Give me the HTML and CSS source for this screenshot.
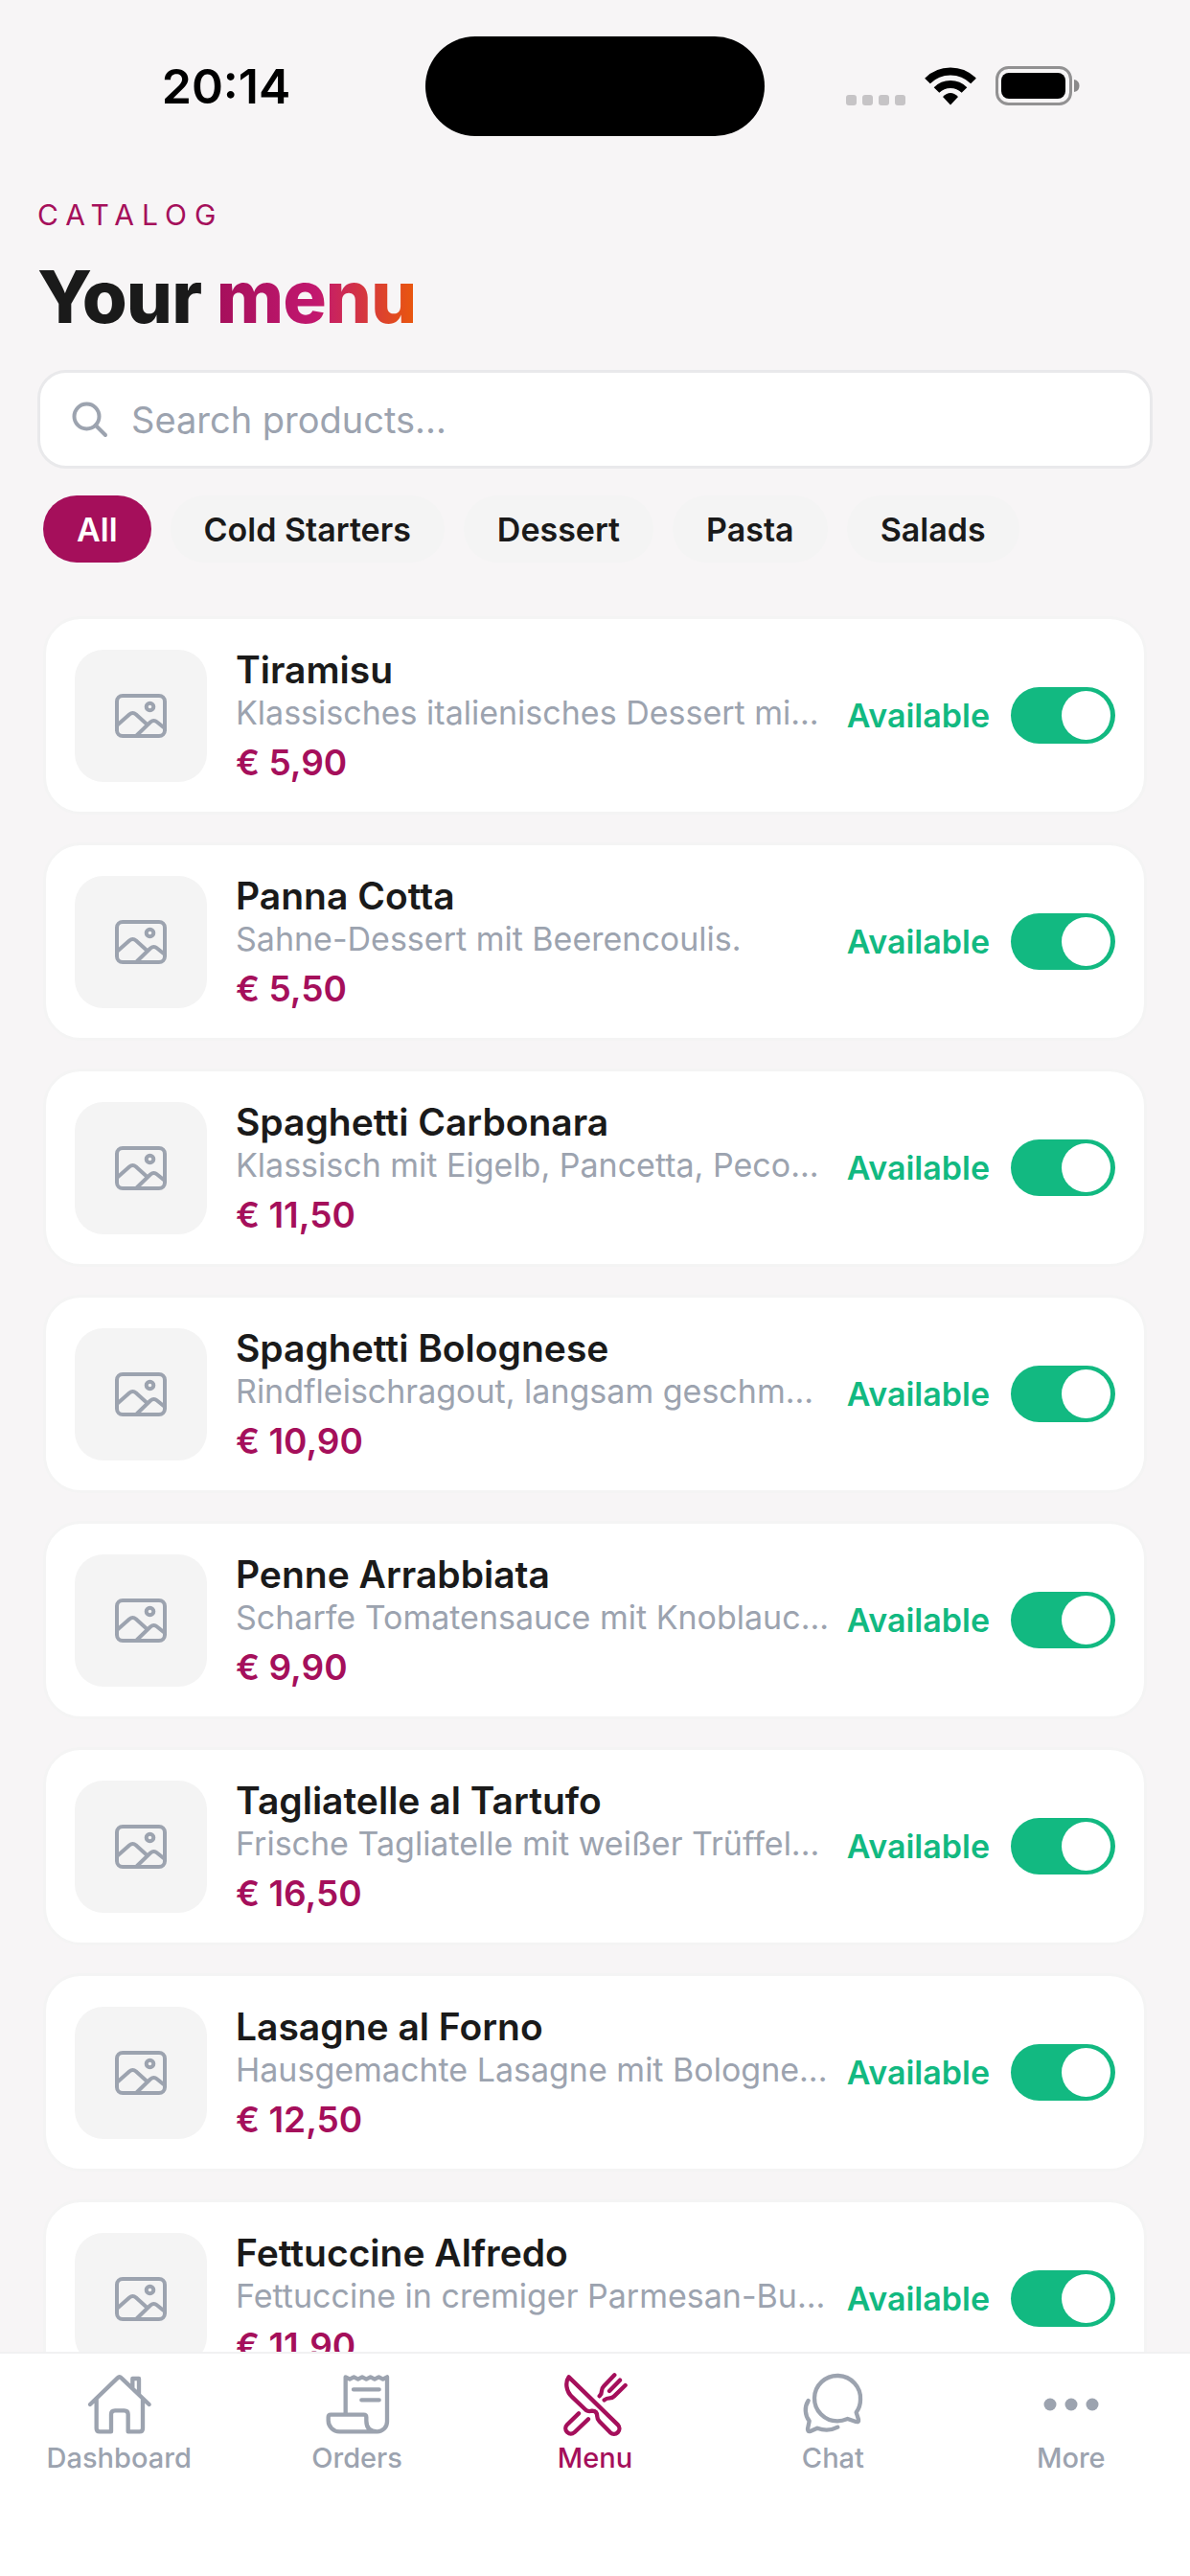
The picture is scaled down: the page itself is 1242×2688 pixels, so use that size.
FILE: index.html
```html
<!DOCTYPE html>
<html lang="en">
<head>
    <meta charset="UTF-8">
    <meta name="viewport" content="width=device-width, initial-scale=1.0">
    <title>Your menu</title>
    <link rel="stylesheet" href="styles.css">
</head>
<body>
    <!-- shared icons -->
    <svg class="sprite" aria-hidden="true">
        <symbol id="icon-image" viewBox="0 0 56 48">
            <rect x="3" y="3" width="50" height="42" rx="6"/>
            <circle cx="37.5" cy="14.5" r="3.8"/>
            <path d="M3 34 L16 22.500 q3.500 -3 7 0 L34 32.500 M24 44 L38 30.500 q3.500 -3 7 0 L53 37"/>
        </symbol>
    </svg>

    <div class="status-bar">
        <div class="time">20:14</div>
        <div class="island"></div>
        <div class="status-icons">
            <svg class="signal" viewBox="0 0 62 42" aria-hidden="true">
                <rect x="0" y="30" width="11" height="11" rx="3"/>
                <rect x="17" y="30" width="11" height="11" rx="3"/>
                <rect x="34" y="30" width="11" height="11" rx="3"/>
                <rect x="51" y="30" width="11" height="11" rx="3"/>
            </svg>
            <svg class="wifi" viewBox="0 0 54 42" aria-hidden="true">
                <path d="M3 15.500 A34 34 0 0 1 51 15.500" fill="none" stroke="#000" stroke-width="8"/>
                <path d="M12.500 25 A20.500 20.500 0 0 1 41.500 25" fill="none" stroke="#000" stroke-width="8"/>
                <path d="M19 32 Q27 24 35 32 L27 40.500 Z"/>
            </svg>
            <svg class="battery" viewBox="0 0 88 42" aria-hidden="true">
                <rect x="1.500" y="1.500" width="77" height="38" rx="12" fill="none" stroke="#929192" stroke-width="3"/>
                <rect x="6" y="7" width="67" height="27" rx="8"/>
                <path d="M82 14 Q87.500 15 87.500 20.500 Q87.500 26 82 27 Z" fill="#8a898a"/>
            </svg>
        </div>
    </div>

    <header>
        <p class="eyebrow">CATALOG</p>
        <h1>Your <span>menu</span></h1>
        <label class="search">
            <svg viewBox="0 0 38 38" aria-hidden="true"><circle cx="15.500" cy="15.500" r="13"/><path d="M25 25 L35 35"/></svg>
            <input type="search" placeholder="Search products..." aria-label="Search products">
        </label>
        <div class="chips">
            <button class="chip active">All</button>
            <button class="chip">Cold Starters</button>
            <button class="chip">Dessert</button>
            <button class="chip">Pasta</button>
            <button class="chip">Salads</button>
        </div>
    </header>

    <main class="products">
        <article class="card">
            <div class="thumb"><svg><use href="#icon-image"/></svg></div>
            <div class="info">
                <h2>Tiramisu</h2>
                <p class="desc">Klassisches italienisches Dessert mi...</p>
                <p class="price">€ 5,90</p>
            </div>
            <label class="available">Available <input type="checkbox" checked></label>
        </article>
        <article class="card">
            <div class="thumb"><svg><use href="#icon-image"/></svg></div>
            <div class="info">
                <h2>Panna Cotta</h2>
                <p class="desc">Sahne-Dessert mit Beerencoulis.</p>
                <p class="price">€ 5,50</p>
            </div>
            <label class="available">Available <input type="checkbox" checked></label>
        </article>
        <article class="card">
            <div class="thumb"><svg><use href="#icon-image"/></svg></div>
            <div class="info">
                <h2>Spaghetti Carbonara</h2>
                <p class="desc">Klassisch mit Eigelb, Pancetta, Peco...</p>
                <p class="price">€ 11,50</p>
            </div>
            <label class="available">Available <input type="checkbox" checked></label>
        </article>
        <article class="card">
            <div class="thumb"><svg><use href="#icon-image"/></svg></div>
            <div class="info">
                <h2>Spaghetti Bolognese</h2>
                <p class="desc">Rindfleischragout, langsam geschm...</p>
                <p class="price">€ 10,90</p>
            </div>
            <label class="available">Available <input type="checkbox" checked></label>
        </article>
        <article class="card">
            <div class="thumb"><svg><use href="#icon-image"/></svg></div>
            <div class="info">
                <h2>Penne Arrabbiata</h2>
                <p class="desc">Scharfe Tomatensauce mit Knoblauc...</p>
                <p class="price">€ 9,90</p>
            </div>
            <label class="available">Available <input type="checkbox" checked></label>
        </article>
        <article class="card">
            <div class="thumb"><svg><use href="#icon-image"/></svg></div>
            <div class="info">
                <h2>Tagliatelle al Tartufo</h2>
                <p class="desc">Frische Tagliatelle mit weißer Trüffel...</p>
                <p class="price">€ 16,50</p>
            </div>
            <label class="available">Available <input type="checkbox" checked></label>
        </article>
        <article class="card">
            <div class="thumb"><svg><use href="#icon-image"/></svg></div>
            <div class="info">
                <h2>Lasagne al Forno</h2>
                <p class="desc">Hausgemachte Lasagne mit Bologne...</p>
                <p class="price">€ 12,50</p>
            </div>
            <label class="available">Available <input type="checkbox" checked></label>
        </article>
        <article class="card">
            <div class="thumb"><svg><use href="#icon-image"/></svg></div>
            <div class="info">
                <h2>Fettuccine Alfredo</h2>
                <p class="desc">Fettuccine in cremiger Parmesan-Bu...</p>
                <p class="price">€ 11,90</p>
            </div>
            <label class="available">Available <input type="checkbox" checked></label>
        </article>
    </main>

    <nav class="tab-bar">
        <a href="#dashboard">
            <svg viewBox="24 18 216 216" aria-hidden="true">
                <path d="M42 132 L128 49 q6 -6 12 0 L227 132 M62 114 V207 q0 10 10 10 H108 V163 q0 -12 12 -12 H149 q12 0 12 12 V217 H197 q10 0 10 -10 V114 M175 82 V51 H195 V100"/>
            </svg>
            Dashboard
        </a>
        <a href="#orders">
            <svg viewBox="20 18 216 216" aria-hidden="true">
                <path d="M91 160 V46 l13 7 l13 -7 l13 7 l13 -7 l13 7 l13 -7 l13 7 l13 -7 l13 7 l13 -7 V186 a31 31 0 0 1 -31 31 H72 a35 35 0 0 1 -35 -35 V172 q0 -8 8 -8 H148 q8 0 8 8 V183 q0 34 34 34 M116 85 H196 M141 118 H196"/>
            </svg>
            Orders
        </a>
        <a href="#menu" class="active">
            <svg viewBox="15 18 216 216" aria-hidden="true">
                <path d="M41 46 L195 196 a17 17 0 0 1 -24 24 L137 185 q-7 -7 -7 -15 q0 -18 -16 -18 q-12 3 -19 -2 L52 109 C32 91 29 62 41 46 Z M72 160 L36 195 a16 16 0 0 0 23 24 L102 178 M184 40 L151 74 q-7 7 -7 15 q0 10 -7 17 M201 56 L168 90 M218 72 L183 106 q-6 6 -14 6 q-10 0 -17 6"/>
            </svg>
            Menu
        </a>
        <a href="#chat">
            <svg viewBox="25 18 216 216" aria-hidden="true">
                <path d="M214 179 L207 157 C215 146 220 132 220 117 A72 71 0 1 0 148 184 C160 184 170 181 180 177 L206 186 Q216 188 214 179 Z M57 120 C44 140 46 165 60 184 L55 208 Q54 218 63 216 L85 206 C105 214 130 213 149 203"/>
            </svg>
            Chat
        </a>
        <a href="#more">
            <svg class="dots" viewBox="0 0 72 72" aria-hidden="true">
                <circle cx="14" cy="38" r="6.500"/><circle cx="36" cy="38" r="6.500"/><circle cx="58" cy="38" r="6.500"/>
            </svg>
            More
        </a>
    </nav>
</body>
</html>
```

FILE: styles.css
```css
:root {
    --primary: #a50f5b;
    --green: #12b981;
    --background: #f7f5f6;
    --text: #1a1a1a;
    --muted: #9ca3af;
    --soft: #f4f4f4;
}

* {
    box-sizing: border-box;
}

body {
    display: flex;
    flex-direction: column;
    height: 100vh;
    margin: 0;
    overflow: hidden;
    font-family: Inter, "Liberation Sans", sans-serif;
    color: var(--text);
    background-color: var(--background);
}

h1, h2, p {
    margin: 0;
}

.sprite {
    display: none;
}

/* Status bar */
.status-bar {
    display: grid;
    grid-template-columns: 1fr 354px 1fr;
    align-items: center;
    height: 180px;
    flex-shrink: 0;
}

.time {
    padding-left: 28px;
    text-align: center;
    font-size: 50px;
    font-weight: 600;
    color: #000;
}

.island {
    height: 104px;
    border-radius: 52px;
    background-color: #000;
}

.status-icons {
    display: flex;
    justify-content: center;
    gap: 20px;
    padding-right: 30px;
}

.status-icons svg {
    height: 42px;
}

.signal {
    width: 62px;
    fill: #c6c4c6;
}

.wifi {
    width: 54px;
}

.battery {
    width: 88px;
}

/* Header */
header {
    padding: 25px 39px 0;
    flex-shrink: 0;
}

.eyebrow {
    font-size: 30px;
    line-height: 38px;
    letter-spacing: 8px;
    color: var(--primary);
}

h1 {
    margin-top: 26px;
    font-size: 76px;
    line-height: 80px;
    font-weight: 800;
    letter-spacing: -1px;
}

h1 span {
    background: linear-gradient(90deg, #a50f5b, #c2186f 50%, #ea580c);
    -webkit-background-clip: text;
    background-clip: text;
    color: transparent;
}

.search {
    display: flex;
    align-items: center;
    gap: 24px;
    height: 103px;
    margin-top: 37px;
    padding: 0 33px;
    border: 3px solid #e9e9eb;
    border-radius: 30px;
    background-color: #fff;
}

.search svg {
    width: 38px;
    height: 38px;
    fill: none;
    stroke: var(--muted);
    stroke-width: 4;
    stroke-linecap: round;
}

.search input {
    flex: 1;
    min-width: 0;
    padding: 0;
    border: none;
    outline: none;
    background: none;
    font-family: inherit;
    font-size: 38px;
    color: var(--text);
}

.search input::placeholder {
    color: var(--muted);
}

.chips {
    display: flex;
    gap: 20px;
    margin-top: 28px;
    padding-left: 6px;
}

.chip {
    height: 70px;
    padding: 0 35px;
    border: none;
    border-radius: 35px;
    background-color: var(--soft);
    font-family: inherit;
    font-size: 34px;
    font-weight: 600;
    color: var(--text);
}

.chip.active {
    background-color: var(--primary);
    color: #fff;
}

/* Product list */
.products {
    display: flex;
    flex-direction: column;
    flex: 1;
    gap: 29px;
    min-height: 0;
    padding: 56px 45px 0;
    overflow: hidden;
}

.card {
    display: flex;
    align-items: center;
    flex-shrink: 0;
    gap: 30px;
    padding: 28px 30px;
    border: 3px solid var(--soft);
    border-radius: 39px;
    background-color: #fff;
}

.thumb {
    display: flex;
    align-items: center;
    justify-content: center;
    width: 138px;
    height: 138px;
    border-radius: 30px;
    background-color: var(--soft);
}

.thumb svg {
    width: 56px;
    height: 48px;
    fill: none;
    stroke: var(--muted);
    stroke-width: 4;
    stroke-linecap: round;
}

.info {
    flex: 1;
    min-width: 0;
    padding-top: 2px;
    white-space: nowrap;
}

.card h2 {
    font-size: 39px;
    line-height: 46px;
    font-weight: 600;
}

.desc {
    font-size: 34px;
    line-height: 44px;
    color: var(--muted);
}

.price {
    margin-top: 7px;
    font-size: 37px;
    line-height: 46px;
    font-weight: 600;
    color: var(--primary);
}

.available {
    display: flex;
    align-items: center;
    gap: 22px;
    font-size: 34px;
    font-weight: 600;
    color: var(--green);
}

.available input {
    appearance: none;
    display: flex;
    justify-content: flex-start;
    width: 109px;
    height: 59px;
    margin: 0;
    padding: 4px 5px;
    border-radius: 30px;
    background-color: #d1d5db;
}

.available input::before {
    content: "";
    width: 51px;
    height: 51px;
    border-radius: 50%;
    background-color: #fff;
}

.available input:checked {
    justify-content: flex-end;
    background-color: var(--green);
}

/* Bottom tabs */
.tab-bar {
    display: grid;
    grid-template-columns: repeat(5, 1fr);
    height: 234px;
    flex-shrink: 0;
    padding-top: 15px;
    border-top: 2px solid #f1f1f2;
    background-color: #fff;
}

.tab-bar a {
    display: flex;
    flex-direction: column;
    align-items: center;
    gap: 5px;
    font-size: 29px;
    line-height: 34px;
    font-weight: 500;
    text-decoration: none;
    color: var(--muted);
}

.tab-bar a.active {
    color: var(--primary);
}

.tab-bar svg {
    width: 72px;
    height: 72px;
    fill: none;
    stroke: currentColor;
    stroke-width: 13;
    stroke-linecap: round;
    stroke-linejoin: round;
}

.tab-bar .dots {
    fill: currentColor;
    stroke: none;
}
```
